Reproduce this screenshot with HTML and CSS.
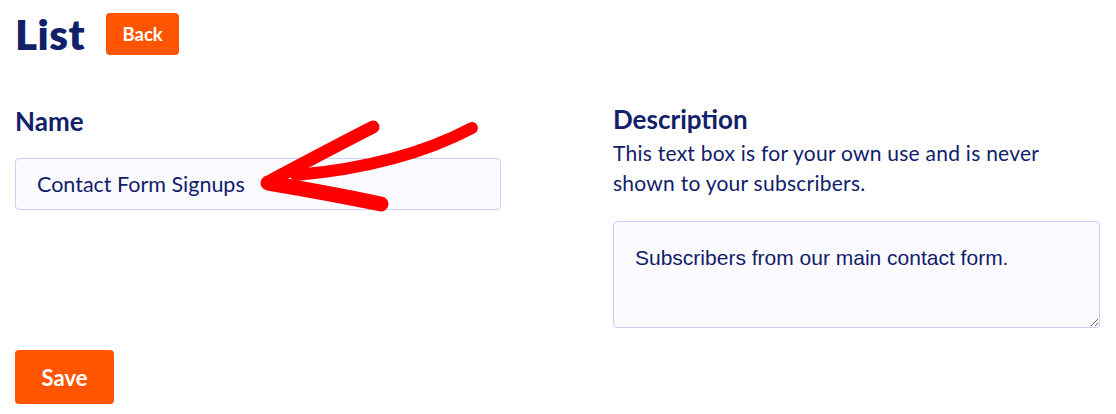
FILE: index.html
```html
<!DOCTYPE html>
<html lang="en">
<head>
    <meta charset="UTF-8">
    <meta name="viewport" content="width=device-width, initial-scale=1.0">
    <title>List</title>
    <link rel="stylesheet" href="styles.css">
</head>
<body>
    <div class="page">
        <div class="page-header">
            <h1>List</h1>
            <button class="btn btn-back">Back</button>
        </div>

        <div class="form-grid">
            <div class="field field-name">
                <label for="list-name">Name</label>
                <div class="input-wrap">
                    <input type="text" id="list-name" value="Contact Form Signups">
                    <svg class="arrow" width="240" height="110" viewBox="250 110 240 110" xmlns="http://www.w3.org/2000/svg">
                        <g fill="none" stroke="#ff0000" stroke-linecap="round" stroke-linejoin="round">
                            <path d="M373 127 Q 330 149 272 180" stroke-width="13"/>
                            <path d="M472 128 Q 400 166 296 175" stroke-width="12"/>
                            <path d="M268 183 Q 328 193 381 204" stroke-width="15"/>
                        </g>
                    </svg>
                </div>
            </div>

            <div class="field field-desc">
                <label for="list-desc">Description</label>
                <p class="help">This text box is for your own use and is never shown to your subscribers.</p>
                <textarea id="list-desc">Subscribers from our main contact form.</textarea>
            </div>
        </div>

        <button class="btn btn-save">Save</button>
    </div>
</body>
</html>
```

FILE: styles.css
```css
* {
    margin: 0;
    padding: 0;
    box-sizing: border-box;
}

body {
    font-family: Lato, 'Noto Sans', sans-serif;
    color: #11206a;
    background-color: white;
}

.page {
    padding: 13px 16px 0 15px;
}

.page-header {
    display: flex;
    align-items: center;
    gap: 21px;
}

.page-header h1 {
    font-size: 42px;
    font-weight: 800;
    line-height: 42px;
    letter-spacing: 0.5px;
}

.btn {
    background-color: #ff5500;
    color: white;
    border: none;
    border-radius: 4px;
    font-family: Lato, 'Noto Sans', sans-serif;
    font-weight: 700;
    cursor: pointer;
}

.btn-back {
    height: 42px;
    width: 73px;
    font-size: 18.5px;
}

.form-grid {
    display: grid;
    grid-template-columns: 486px 487px;
    gap: 112px;
    margin-top: 49px;
}

.field label {
    display: block;
    font-size: 26px;
    font-weight: 700;
    line-height: 30px;
}

.field-name {
    padding-top: 2px;
}

.field-name label {
    margin-bottom: 22px;
}

.input-wrap {
    position: relative;
}

#list-name {
    width: 100%;
    height: 52px;
    padding: 0 21px;
    border: 1px solid #c6cff4;
    border-radius: 4px;
    background-color: #fbfbff;
    color: #11206a;
    font-family: Lato, 'Noto Sans', sans-serif;
    font-size: 21.5px;
    outline: none;
}

.arrow {
    position: absolute;
    left: 235px;
    top: -48px;
    pointer-events: none;
}

.help {
    max-width: 460px;
    margin-top: 4px;
    font-size: 21px;
    line-height: 30px;
    letter-spacing: 0.25px;
}

#list-desc {
    display: block;
    width: 100%;
    height: 107px;
    margin-top: 23px;
    padding: 23px 21px 0;
    border: 1px solid #c6cff4;
    border-radius: 4px;
    background-color: #fbfbff;
    color: #11206a;
    font-family: 'Liberation Sans', Arial, sans-serif;
    font-size: 21px;
    line-height: 26px;
    resize: vertical;
    outline: none;
}

.btn-save {
    margin-top: 22px;
    width: 99px;
    height: 54px;
    font-size: 22px;
}
```
